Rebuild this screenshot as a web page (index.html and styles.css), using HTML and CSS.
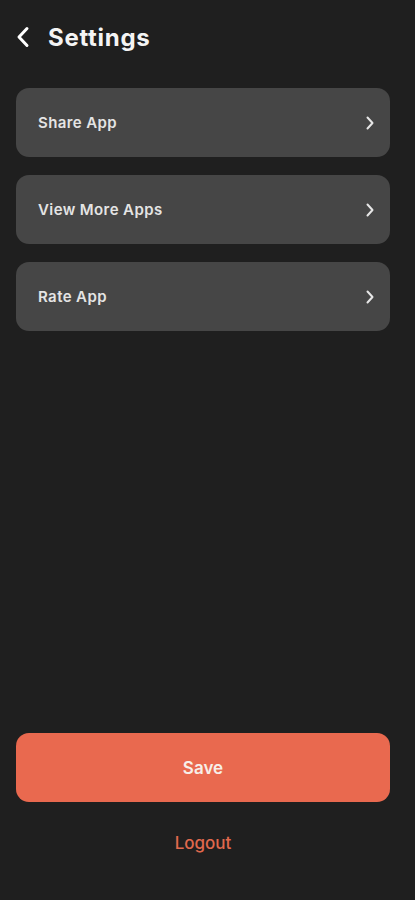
FILE: index.html
```html
<!DOCTYPE html>
<html lang="en">
<head>
<meta charset="utf-8">
<meta name="viewport" content="width=device-width, initial-scale=1">
<title>Settings</title>
<link rel="stylesheet" href="styles.css">
</head>
<body>
<div class="screen">
  <header class="header">
    <button class="back" aria-label="Back">
      <svg width="14" height="22" viewBox="0 0 14 22" fill="none">
        <path d="M11 2.5 L3 11 L11 19.5" stroke="#ffffff" stroke-width="3" stroke-linecap="round" stroke-linejoin="round"/>
      </svg>
    </button>
    <h1 class="title">Settings</h1>
  </header>

  <div class="list">
    <div class="item">
      <span class="item-label">Share App</span>
      <svg class="chev" width="10" height="16" viewBox="0 0 10 16" fill="none"><path d="M2.5 2.5 L7.5 8 L2.5 13.5" stroke="#e6e6e6" stroke-width="2" stroke-linecap="round" stroke-linejoin="round"/></svg>
    </div>
    <div class="item">
      <span class="item-label">View More Apps</span>
      <svg class="chev" width="10" height="16" viewBox="0 0 10 16" fill="none"><path d="M2.5 2.5 L7.5 8 L2.5 13.5" stroke="#e6e6e6" stroke-width="2" stroke-linecap="round" stroke-linejoin="round"/></svg>
    </div>
    <div class="item">
      <span class="item-label">Rate App</span>
      <svg class="chev" width="10" height="16" viewBox="0 0 10 16" fill="none"><path d="M2.5 2.5 L7.5 8 L2.5 13.5" stroke="#e6e6e6" stroke-width="2" stroke-linecap="round" stroke-linejoin="round"/></svg>
    </div>
  </div>

  <div class="spacer"></div>

  <footer class="footer">
    <button class="save">Save</button>
    <button class="logout">Logout</button>
  </footer>
</div>
</body>
</html>
```

FILE: styles.css
```css
* { box-sizing: border-box; }

html, body {
  margin: 0;
  padding: 0;
  background: #1f1f1f;
}

body {
  font-family: Inter, "Noto Sans", "Liberation Sans", sans-serif;
  color: #ffffff;
}

.screen {
  display: flex;
  flex-direction: column;
  height: 900px;
  padding: 0 25px 0 16px;
}

.header {
  display: flex;
  align-items: center;
  height: 42px;
  margin-top: 16px;
  gap: 18px;
}

.back {
  display: flex;
  align-items: center;
  justify-content: center;
  width: 14px;
  height: 22px;
  padding: 0;
  border: 0;
  background: none;
}

.title {
  margin: 0;
  font-size: 24px;
  font-weight: 700;
  letter-spacing: 0.7px;
  color: #f4f4f4;
}

.list {
  display: flex;
  flex-direction: column;
  gap: 18px;
  margin-top: 30px;
}

.item {
  display: flex;
  align-items: center;
  justify-content: space-between;
  height: 69px;
  padding: 0 15px 0 22px;
  background: #464646;
  border-radius: 13px;
}

.item-label {
  font-size: 15px;
  font-weight: 600;
  letter-spacing: 0.4px;
  color: #e4e4e4;
}

.chev {
  display: block;
}

.spacer {
  flex: 1;
}

.footer {
  display: flex;
  flex-direction: column;
  align-items: stretch;
  padding-bottom: 46px;
}

.save {
  height: 69px;
  border: 0;
  border-radius: 13px;
  background: #e9694f;
  color: #f7efe9;
  font-family: inherit;
  font-size: 17px;
  font-weight: 600;
}

.logout {
  margin-top: 30px;
  height: 22px;
  border: 0;
  padding: 0;
  background: none;
  color: #e0694d;
  font-family: inherit;
  font-size: 17px;
  font-weight: 500;
}
```
